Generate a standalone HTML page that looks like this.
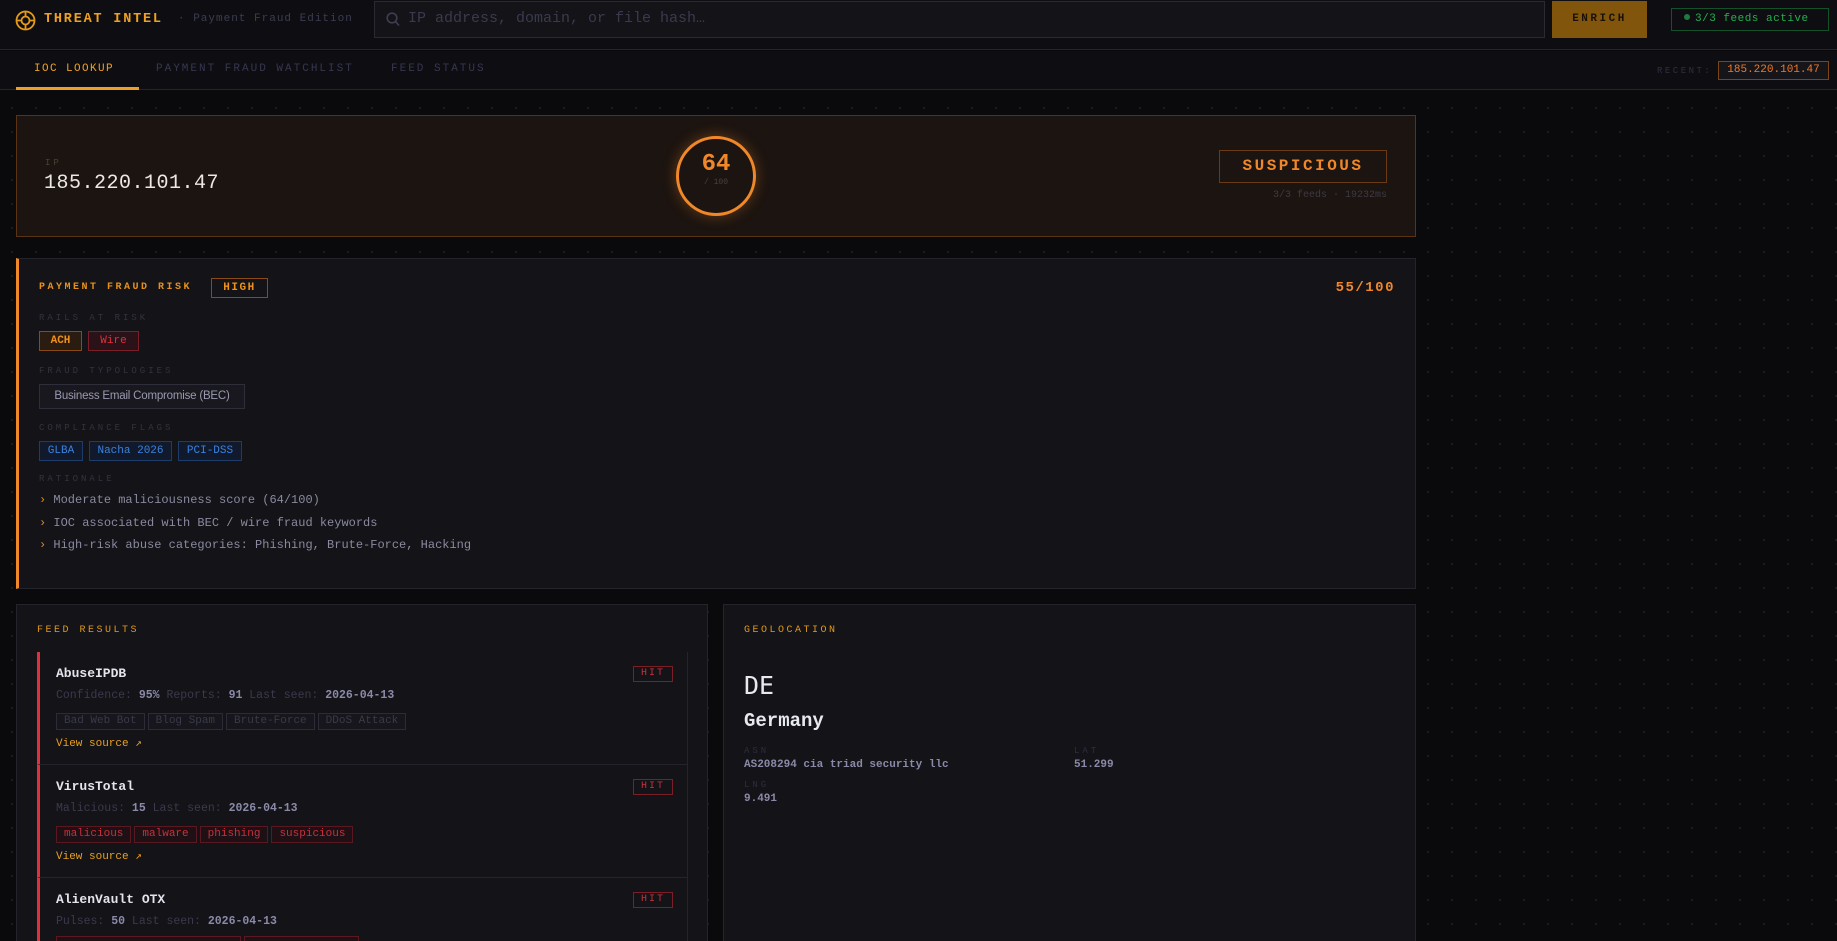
<!DOCTYPE html>
<html style="width:1837px;height:941px;overflow:hidden"><head><meta charset="utf-8"><style>
*{box-sizing:border-box;margin:0;padding:0}
body{width:1837px;height:941px;overflow:hidden;background:#0a0a0c;font-family:"Liberation Mono",monospace;color:#c8c8d4;position:relative;
background-image:radial-gradient(circle,#1c1c22 1px,transparent 1.2px);background-size:24px 24px}
.a{position:absolute}
.hdr{left:0;top:0;width:1837px;height:50px;background:#0e0e12;border-bottom:1px solid #24242c}
.nav{left:0;top:51px;width:1837px;height:39px;background:#0e0e12;border-bottom:1px solid #24242c}
.lbl{font-size:9px;letter-spacing:3px;color:#33333f;text-transform:uppercase}
.card{background:#131318;border:1px solid #24242c}
.chip{position:absolute;height:20px;font-size:11px;line-height:18px;text-align:center;border:1px solid}
.sec{font-size:10px;letter-spacing:2.5px;color:#e39a16}
.r{font-size:12px;color:#8a8aa0}
.tag{display:inline-block;height:17px;line-height:15px;font-size:11px;padding:0 7px;border:1px solid #2c2c38;color:#3a3a4a;background:#16161c;margin-right:3px}
.tag.red{border-color:#5a1820;color:#c8303c;background:#1e1014}
.hit{position:absolute;right:15px;top:14px;width:40px;height:16px;border:1px solid #7a1e28;color:#c8303c;font-size:10px;letter-spacing:2px;text-align:center;line-height:14px}
.meta{font-size:11.5px;color:#3a3a4c}.meta b{color:#8a8aa8}
</style></head><body>
<div class="a hdr"></div>
<svg class="a" style="left:15px;top:10px" width="21" height="21" viewBox="0 0 21 21" fill="none" stroke="#e69a1a" stroke-width="1.8"><circle cx="10.5" cy="10.5" r="9"/><circle cx="10.5" cy="10.5" r="4"/><path d="M10.5 1.5v5M10.5 14.5v5M1.5 10.5h5M14.5 10.5h5"/></svg>
<div class="a" style="left:44px;top:12px;font-size:13.5px;font-weight:bold;letter-spacing:1.8px;color:#f0a020">THREAT INTEL</div>
<div class="a" style="left:178px;top:13px;font-size:11px;letter-spacing:1px;color:#3c3c52">· Payment Fraud Edition</div>
<div class="a" style="left:374px;top:1px;width:1171px;height:37px;background:#131318;border:1px solid #2a2a36"></div>
<svg class="a" style="left:386px;top:12px" width="14" height="15" viewBox="0 0 14 15" fill="none" stroke="#3e3e52" stroke-width="1.6"><circle cx="6" cy="6" r="4.8"/><path d="M9.5 9.5l3.5 4"/></svg>
<div class="a" style="left:408px;top:10px;font-size:15px;color:#3a3a4e">IP address, domain, or file hash…</div>
<div class="a" style="left:1552px;top:1px;width:95px;height:37px;background:#82550c;color:#1a1208;font-size:11px;letter-spacing:2.5px;font-weight:bold;text-align:center;line-height:37px">ENRICH</div>
<div class="a" style="left:1671px;top:8px;width:158px;height:23px;border:1px solid #14502a;color:#22b04c;font-size:11px;letter-spacing:.5px;line-height:21px;padding-left:12px"><span style="display:inline-block;width:6px;height:6px;border-radius:50%;background:#1f7a3c;margin-right:5px;vertical-align:1px"></span>3/3 feeds active</div>
<div class="a nav"></div>
<div class="a" style="left:34px;top:63px;font-size:11px;letter-spacing:1.4px;color:#f0a020">IOC LOOKUP</div>
<div class="a" style="left:16px;top:87px;width:123px;height:3px;background:#f0a020"></div>
<div class="a" style="left:156px;top:63px;font-size:11px;letter-spacing:2px;color:#363650">PAYMENT FRAUD WATCHLIST</div>
<div class="a" style="left:391px;top:63px;font-size:11px;letter-spacing:2px;color:#363650">FEED STATUS</div>
<div class="a" style="left:1657px;top:66px;font-size:9px;letter-spacing:2.5px;color:#2e2e46">RECENT:</div>
<div class="a" style="left:1718px;top:61px;width:111px;height:19px;border:1px solid #7a4418;background:#15151a;color:#f07a28;font-size:11px;text-align:center;line-height:17px">185.220.101.47</div>

<div class="a" style="left:16px;top:115px;width:1400px;height:122px;background:#1c1410;border:1px solid #5a3412"></div>
<div class="a lbl" style="left:45px;top:158px;color:#4a4036">IP</div>
<div class="a" style="left:44px;top:172px;font-size:20px;color:#ece8e4;letter-spacing:.5px">185.220.101.47</div>
<div class="a" style="left:676px;top:136px;width:80px;height:80px;border:3px solid #f0882a;border-radius:50%;box-shadow:0 0 14px rgba(240,136,42,.35);text-align:center">
<div style="font-size:24px;font-weight:bold;color:#f0882a;margin-top:13px;line-height:26px">64</div>
<div style="font-size:8px;color:#4a4040">/ 100</div></div>
<div class="a" style="left:1219px;top:150px;width:168px;height:33px;border:1px solid #6a3a14;color:#f0882a;font-size:16px;font-weight:bold;letter-spacing:2.5px;text-align:center;line-height:31px">SUSPICIOUS</div>
<div class="a" style="left:1187px;width:200px;top:190px;text-align:right;font-size:10px;color:#3e3a44">3/3 feeds · 19232ms</div>

<div class="a card" style="left:16px;top:258px;width:1400px;height:331px;border-left:3px solid #f0882a"></div>
<div class="a sec" style="left:39px;top:282px;font-weight:bold;color:#e8901a">PAYMENT FRAUD RISK</div>
<div class="chip" style="left:211px;top:278px;width:57px;border-color:#8a4a18;color:#f0901a;font-size:11px;letter-spacing:1.5px;font-weight:bold">HIGH</div>
<div class="a" style="left:1300px;width:95px;text-align:right;top:280px;font-size:14px;font-weight:bold;letter-spacing:1.5px;color:#f0882a">55/100</div>
<div class="a lbl" style="left:39px;top:313px">RAILS AT RISK</div>
<div class="chip" style="left:39px;top:331px;width:43px;background:#2a1c10;border-color:#8a4a18;color:#f0901a;font-weight:bold">ACH</div>
<div class="chip" style="left:88px;top:331px;width:51px;background:#2a1218;border-color:#7a1e28;color:#e0303e">Wire</div>
<div class="a lbl" style="left:39px;top:366px">FRAUD TYPOLOGIES</div>
<div class="chip" style="left:39px;top:384px;width:206px;height:25px;line-height:23px;background:#18181e;border-color:#2e2e3a;color:#9a9ab0;font-family:'Liberation Sans',sans-serif;font-size:11.5px;letter-spacing:-.2px">Business Email Compromise (BEC)</div>
<div class="a lbl" style="left:39px;top:423px">COMPLIANCE FLAGS</div>
<div class="chip" style="left:39px;top:441px;width:44px;background:#101a2c;border-color:#1e3c6a;color:#3a82e0">GLBA</div>
<div class="chip" style="left:89px;top:441px;width:83px;background:#101a2c;border-color:#1e3c6a;color:#3a82e0">Nacha 2026</div>
<div class="chip" style="left:178px;top:441px;width:64px;background:#101a2c;border-color:#1e3c6a;color:#3a82e0">PCI-DSS</div>
<div class="a lbl" style="left:39px;top:474px">RATIONALE</div>
<div class="a r" style="left:39px;top:493px"><span style="color:#e08a1a">›</span> Moderate maliciousness score (64/100)</div>
<div class="a r" style="left:39px;top:516px"><span style="color:#e08a1a">›</span> IOC associated with BEC / wire fraud keywords</div>
<div class="a r" style="left:39px;top:538px"><span style="color:#e08a1a">›</span> High-risk abuse categories: Phishing, Brute-Force, Hacking</div>

<div class="a card" style="left:16px;top:604px;width:692px;height:337px;border-bottom:none;overflow:hidden">
<div class="a sec" style="left:20px;top:20px">FEED RESULTS</div>
<div class="a" style="left:20px;top:47px;width:651px;height:300px;border-right:1px solid #24242c"></div>

<div class="a" style="left:20px;top:47px;width:651px;height:113px;border-left:3px solid #e0303e;border-bottom:1px solid #24242c">
<div class="hit">HIT</div>
<div class="a" style="left:16px;top:14px;font-size:13px;font-weight:bold;color:#e4e4ec">AbuseIPDB</div>
<div class="a meta" style="left:16px;top:37px">Confidence: <b>95%</b>  Reports: <b>91</b>  Last seen: <b>2026-04-13</b></div>
<div class="a" style="left:16px;top:58px;white-space:nowrap"><span class="tag">Bad Web Bot</span><span class="tag">Blog Spam</span><span class="tag">Brute-Force</span><span class="tag">DDoS Attack</span></div>
<div class="a" style="left:16px;top:84px;font-size:11px;color:#e8a020">View source ↗</div></div>

<div class="a" style="left:20px;top:160px;width:651px;height:113px;border-left:3px solid #e0303e;border-bottom:1px solid #24242c">
<div class="hit">HIT</div>
<div class="a" style="left:16px;top:14px;font-size:13px;font-weight:bold;color:#e4e4ec">VirusTotal</div>
<div class="a meta" style="left:16px;top:37px">Malicious: <b>15</b>  Last seen: <b>2026-04-13</b></div>
<div class="a" style="left:16px;top:58px;white-space:nowrap"><span class="tag red">malicious</span><span class="tag red">malware</span><span class="tag red">phishing</span><span class="tag red">suspicious</span></div>
<div class="a" style="left:16px;top:84px;font-size:11px;color:#e8a020">View source ↗</div></div>

<div class="a" style="left:20px;top:273px;width:651px;height:112px;border-left:3px solid #e0303e">
<div class="hit">HIT</div>
<div class="a" style="left:16px;top:14px;font-size:13px;font-weight:bold;color:#e4e4ec">AlienVault OTX</div>
<div class="a meta" style="left:16px;top:37px">Pulses: <b>50</b>  Last seen: <b>2026-04-13</b></div>
<div class="a" style="left:16px;top:58px;white-space:nowrap"><span class="tag red" style="width:185px"></span><span class="tag red" style="width:115px"></span></div></div>
</div>

<div class="a card" style="left:723px;top:604px;width:693px;height:337px;border-bottom:none"></div>
<div class="a sec" style="left:744px;top:625px">GEOLOCATION</div>
<div class="a" style="left:744px;top:671px;font-size:25px;color:#e8e8f0;font-family:'DejaVu Sans Mono',monospace">DE</div>
<div class="a" style="left:744px;top:710px;font-size:19px;font-weight:bold;color:#e8e8f0">Germany</div>
<div class="a lbl" style="left:744px;top:746px;color:#2e2e3e">ASN</div>
<div class="a" style="left:744px;top:759px;font-size:11px;font-weight:bold;color:#8a8aa8">AS208294 cia triad security llc</div>
<div class="a lbl" style="left:1074px;top:746px;color:#2e2e3e">LAT</div>
<div class="a" style="left:1074px;top:759px;font-size:11px;font-weight:bold;color:#8a8aa8">51.299</div>
<div class="a lbl" style="left:744px;top:780px;color:#2e2e3e">LNG</div>
<div class="a" style="left:744px;top:793px;font-size:11px;font-weight:bold;color:#8a8aa8">9.491</div>
</body></html>
